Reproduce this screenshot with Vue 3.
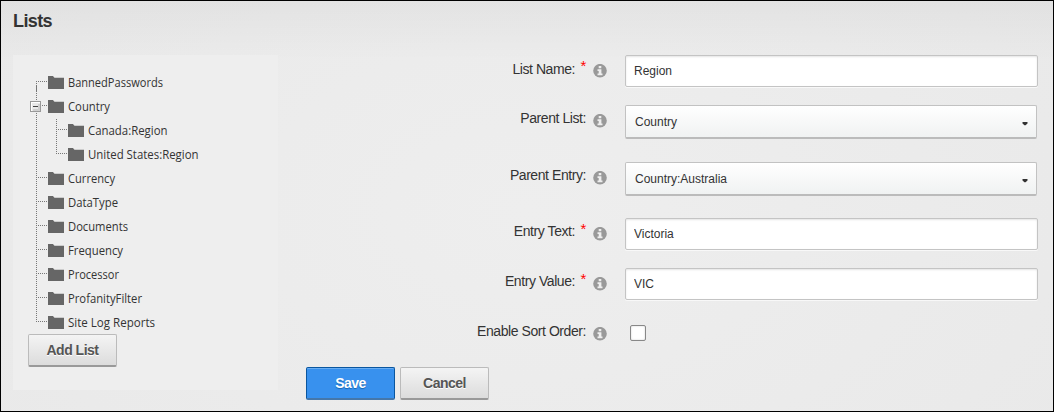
<script setup>
import { ref } from 'vue'

const nodes = [
  { name: 'BannedPasswords', first: true, w: 95 },
  { name: 'Country', open: true, w: 42 },
  { name: 'Canada:Region', child: true, w: 79.5 },
  { name: 'United States:Region', child: true, last: true, w: 110.5 },
  { name: 'Currency', w: 47 },
  { name: 'DataType', w: 50 },
  { name: 'Documents', w: 60 },
  { name: 'Frequency', w: 55 },
  { name: 'Processor', w: 51 },
  { name: 'ProfanityFilter', w: 74 },
  { name: 'Site Log Reports', last: true, w: 87 },
]
const fields = ref([
  { label: 'List Name:', required: true, type: 'text', value: 'Region' },
  { label: 'Parent List:', type: 'select', value: 'Country' },
  { label: 'Parent Entry:', type: 'select', value: 'Country:Australia' },
  { label: 'Entry Text:', required: true, type: 'text', value: 'Victoria' },
  { label: 'Entry Value:', required: true, type: 'text', value: 'VIC' },
  { label: 'Enable Sort Order:', type: 'check', value: '' },
])
</script>

<template>
  <div class="page">
    <h1>Lists</h1>
    <div class="columns">
      <aside class="panel">
        <div class="tree">
          <div v-for="n in nodes" :key="n.name" class="node">
            <svg class="lines" :width="n.child ? 40 : 20" height="24" shape-rendering="crispEdges">
              <g fill="none" stroke="#777" stroke-dasharray="1 1">
                <path v-if="n.first" d="M8.5 10V24" />
                <path v-else-if="n.last && !n.child" d="M8.5 0V11" />
                <path v-else d="M8.5 0V24" />
                <path v-if="!n.child" d="M8 10.5H20" />
                <template v-else>
                  <path :d="n.last ? 'M28.5 0V11' : 'M28.5 0V24'" />
                  <path d="M28 10.5H40" />
                </template>
              </g>
              <path v-if="n.first" d="M8.5 15V21" stroke="#777" />
              <g v-if="n.open">
                <rect x="2.5" y="6.5" width="10" height="10" fill="#e9e9e9" stroke="#999" />
                <path d="M3 7H12V8H4V16H3Z" fill="#fff" />
                <path d="M10 9H12V16H5V14H10Z" fill="#cfcfcf" />
                <path d="M5 11.5H10" stroke="#444" />
              </g>
            </svg>
            <svg class="folder" width="16" height="14">
              <path d="M5 1H16V3H5Z" fill="#ccc" />
              <path d="M0 0H5L6.5 2H16V13H0Z" fill="#666" />
            </svg>
            <svg class="name" :width="n.w + 4" height="24"><text x="0" y="16" :textLength="n.w" lengthAdjust="spacingAndGlyphs">{{ n.name }}</text></svg>
          </div>
        </div>
        <button class="btn add">Add List</button>
      </aside>
      <main>
        <div class="form">
          <div v-for="f in fields" :key="f.label" class="row">
            <div class="label"><span>{{ f.label }}</span><b v-if="f.required">*</b></div>
            <svg class="info" width="14" height="14" viewBox="0 0 14 14">
              <circle cx="7" cy="6.7" r="6.8" fill="#999" />
              <path d="M5.7 2H8.3V4.3H5.7ZM4.5 5.3H8.4V9.6H9.5V11.2H4.5V9.6H5.7V6.9H4.5Z" fill="#eee" />
            </svg>
            <input v-if="f.type === 'text'" v-model="f.value" class="text" />
            <div v-else-if="f.type === 'select'" class="select">
              <span>{{ f.value }}</span>
              <svg width="6" height="4"><path d="M0.5 0H5.5V1.5L3.6 3.3H2.4L0.5 1.5Z" fill="#333" /></svg>
            </div>
            <span v-else class="check"></span>
          </div>
        </div>
        <div class="actions">
          <button class="btn primary">Save</button>
          <button class="btn">Cancel</button>
        </div>
      </main>
    </div>
  </div>
</template>

<style>
body { margin: 0; overflow: hidden; }
</style>
<style scoped>
* { box-sizing: border-box; }
.page {
  width: 1054px; height: 412px; border: 1px solid #000; color: #333;
  font-family: "Liberation Sans", Arial, sans-serif;
  background:
    linear-gradient(rgba(0, 0, 0, 0.035), rgba(0, 0, 0, 0) 60px),
    radial-gradient(ellipse 800px 500px at 525px 210px, #eee 0%, #ebebeb 50%, #e8e8e8 100%);
}
h1 { margin: 0; height: 54px; padding: 9px 0 0 12px; font-size: 18px; line-height: 22px; letter-spacing: -0.6px; }
.columns { display: flex; padding-left: 12px; }
.panel { width: 265px; height: 335px; padding: 16px 0 0 15px; background: #eee; }
.node { display: flex; height: 24px; }
.lines { flex: none; }
.folder { margin-top: 5px; flex: none; }
.name { margin-left: 4px; overflow: visible; }
.name text { font: 12px "Open Sans", "Noto Sans", sans-serif; fill: #333; }
.btn {
  display: block; width: 89px; height: 33px; padding: 0 0 1px; border: 1px solid #bbb; border-bottom: 2px solid #999; border-radius: 2px;
  background: linear-gradient(#f4f4f4, #dcdcdc); color: #555; text-shadow: 0 1px 0 #fff;
  font: bold 14px "Liberation Sans", Arial, sans-serif; letter-spacing: -0.5px;
}
.add { margin-top: -1px; }
.primary { background: #3891ee; border-color: #0a569f; border-bottom-color: #4577aa; color: #fff; text-shadow: 0 1px 1px #1665ae; box-shadow: inset 0 1px #68adf3; }
main { margin-left: 28px; width: 732px; }
.form { display: grid; grid-template-rows: 50px 57px 56px 50px 50px 49px; }
.row { display: flex; align-items: flex-start; }
.label { width: 280px; height: 28px; display: flex; justify-content: flex-end; font-size: 14px; line-height: 26px; letter-spacing: -0.43px; }
.row:first-child .label { line-height: 28px; }
.label b { width: 11px; color: #f00; font-weight: normal; font-size: 15px; line-height: 22px; text-align: right; }
.info { margin: 9px 18px 0 7px; flex: none; }
.text {
  width: 413px; height: 32px; padding: 0 8px; border: 1px solid #c4c4c4; border-radius: 2px; background: #fff; color: #333;
  box-shadow: inset 0 1px 2px #e4e4e4, 0 1px #f8f8f8; font: 12px "Liberation Sans", Arial, sans-serif; outline: none;
}
.select {
  width: 412px; height: 34px; display: flex; align-items: center; justify-content: space-between; padding: 0 8px 0 9px;
  border: 1px solid #c2c2c2; border-bottom: 2px solid #bbb; border-radius: 2px; background: linear-gradient(#fff, #f0f2f2); font-size: 12px;
}
.select svg { margin-top: 4px; }
.check { width: 16px; height: 16px; margin: 7px 0 0 5px; border: 1px solid #888; border-radius: 2px; background: #fff; box-shadow: inset 0 0 2px #ccc; }
.actions { display: flex; gap: 5px; }
</style>
